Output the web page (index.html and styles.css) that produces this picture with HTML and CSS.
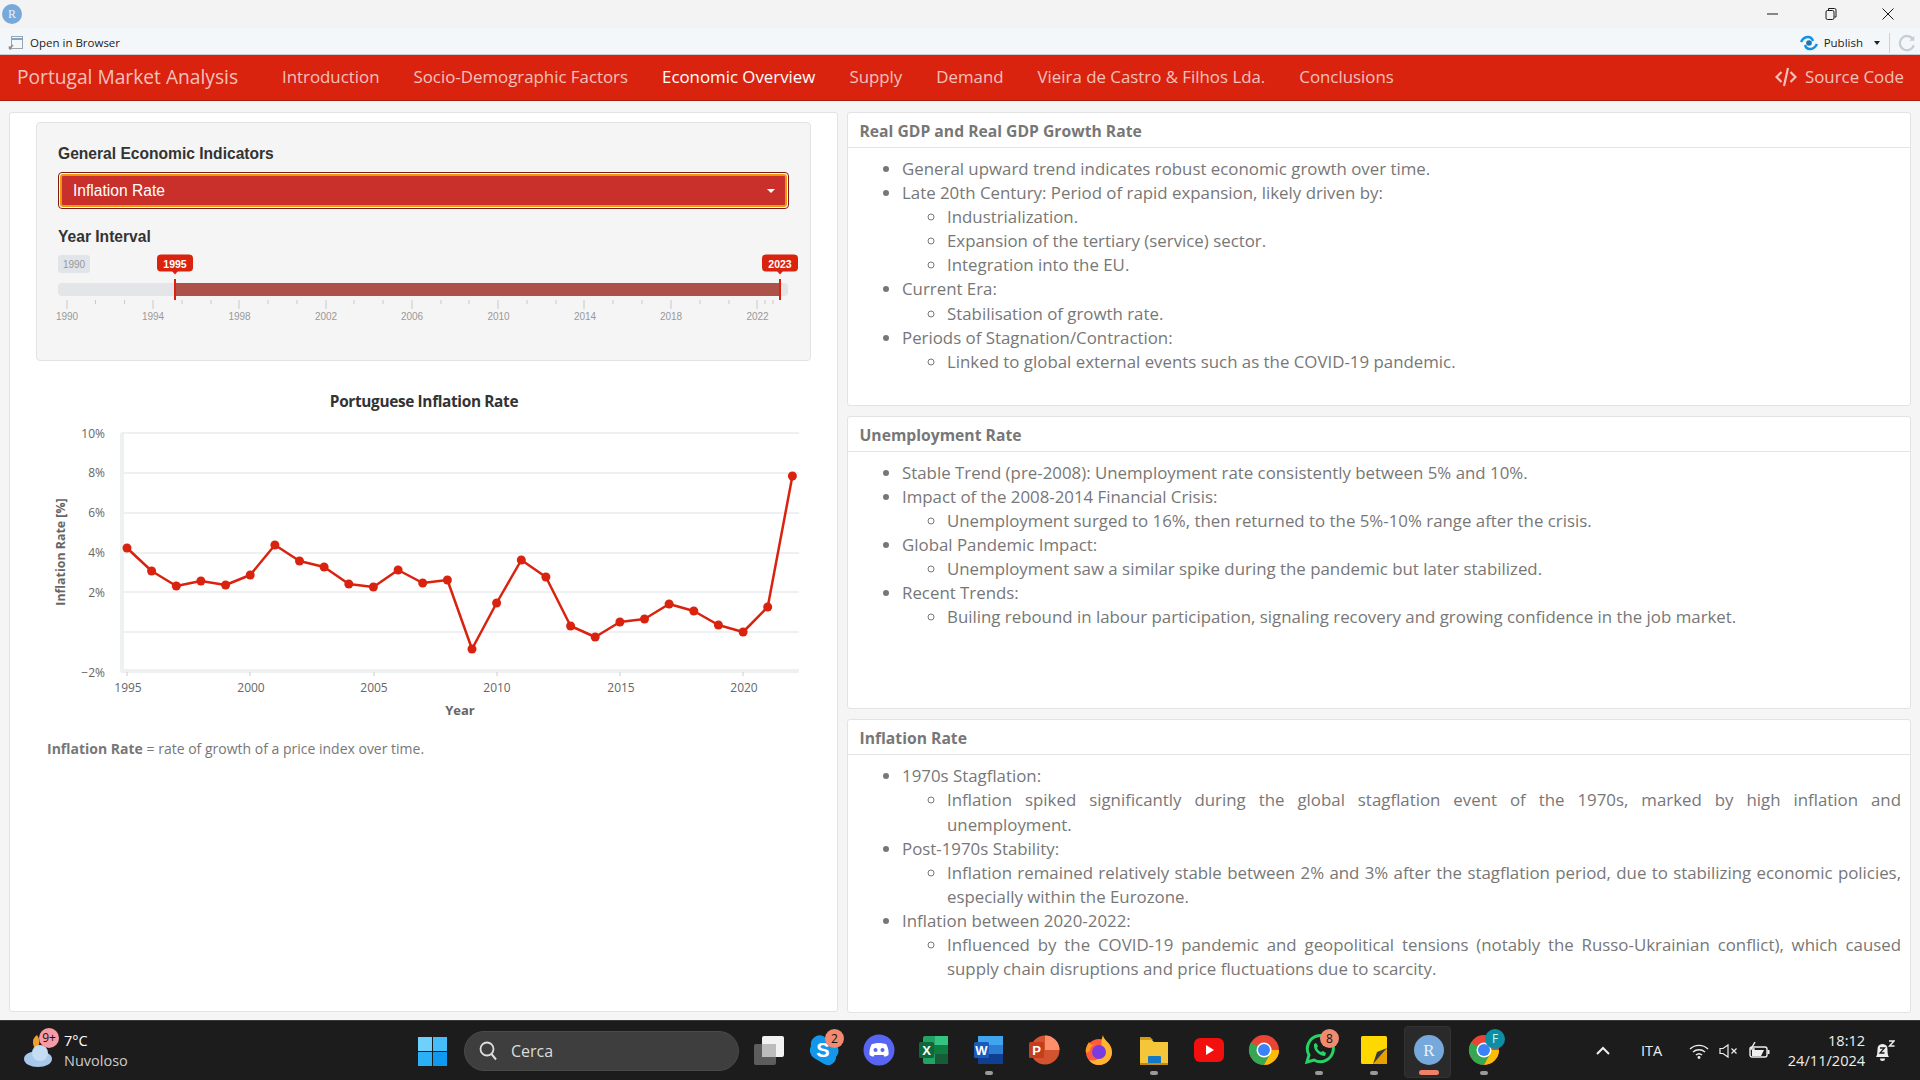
FILE: index.html
```html
<!DOCTYPE html>
<html lang="en">
<head>
<meta charset="utf-8">
<title>Portugal Market Analysis</title>
<link rel="stylesheet" href="styles.css">
</head>
<body>
<div class="titlebar">
  <span class="r-dot">R</span>
  <div class="win-controls">
    <svg width="14" height="14" viewBox="0 0 14 14"><path d="M1 7h11" class="wc"/></svg>
    <svg width="14" height="14" viewBox="0 0 14 14"><rect x="2" y="3.5" width="8" height="9" rx="1.5" class="wc"/><path d="M4.5 3V1.5h6a1.5 1.5 0 0 1 1.5 1.5v7h-1.5" class="wc"/></svg>
    <svg width="14" height="14" viewBox="0 0 14 14"><path d="M1.5 1.5l11 11M12.5 1.5l-11 11" class="wc"/></svg>
  </div>
</div>
<div class="toolbar">
  <svg class="tb-icon" width="16" height="16" viewBox="0 0 16 16"><rect x="3.5" y="1.5" width="11" height="12" fill="#f4f6f8" stroke="#9aa7b3"/><path d="M3.500 4h11" stroke="#7fa6c9" stroke-width="2"/><path d="M1 14l4-4M1 11.500l2 3" stroke="#8b8f93" stroke-width="1.500" fill="none"/></svg>
  <span class="tb-label">Open in Browser</span>
  <span class="tb-spacer"></span>
  <svg class="tb-publish" width="18" height="16" viewBox="0 0 18 16"><path d="M1 7c3-6 10-7 12-1M17 9c-3 6-10 7-12 1" stroke="#1493e6" stroke-width="2.500" fill="none"/><circle cx="9" cy="8" r="2.800" fill="#1475b8"/></svg>
  <span class="tb-label">Publish</span>
  <span class="tb-caret"></span>
  <span class="tb-sep"></span>
  <svg width="18" height="18" viewBox="0 0 16 16"><path d="M13.500 5A6.300 6.300 0 1 0 14 10" fill="none" stroke="#c3ced8" stroke-width="2"/><path d="M14.500 1.500V6h-4.500z" fill="#c3ced8"/></svg>
</div>
<nav class="navbar">
  <a class="brand">Portugal Market Analysis</a>
  <ul class="nav-items">
    <li>Introduction</li>
    <li>Socio-Demographic Factors</li>
    <li class="active">Economic Overview</li>
    <li>Supply</li>
    <li>Demand</li>
    <li>Vieira de Castro &amp; Filhos Lda.</li>
    <li>Conclusions</li>
  </ul>
  <a class="source">
    <svg width="22" height="22" viewBox="0 0 22 22"><path d="M6.500 6L1.500 11l5 5M15.500 6l5 5-5 5M13 2L9 20" fill="none" stroke="currentColor" stroke-width="2.200"/></svg>
    <span>Source Code</span>
  </a>
</nav>
<main class="main">
  <section class="panel left-panel">
    <div class="well">
      <label class="ctl-label">General Economic Indicators</label>
      <div class="select-focus">
        <div class="select-box"><span>Inflation Rate</span><i class="select-caret"></i></div>
      </div>
      <label class="ctl-label year-label">Year Interval</label>
      <svg class="slider" width="750" height="90" viewBox="56 250 750 90">
        <rect x="58" y="255" width="32" height="18" rx="3" fill="#e1e4e8"/>
        <text x="74" y="268" class="s-min">1990</text>
        <rect x="58" y="283" width="730" height="13" rx="4" fill="#e3e5e9"/>
        <rect x="175" y="283" width="605" height="13" fill="#ad5249"/>
        <g class="ticks">
          <path d="M67 300v9M153 300v9M239 300v9M326 300v9M412 300v9M498 300v9M584 300v9M671 300v9M757 300v9" stroke="#c9c9c9"/>
          <path d="M95.500 300v4M124.500 300v4M182 300v4M211 300v4M268 300v4M297 300v4M354 300v4M383 300v4M441 300v4M469 300v4M527 300v4M556 300v4M613 300v4M642 300v4M700 300v4M729 300v4M765 300v4M773 300v4" stroke="#c9c9c9"/>
        </g>
        <g class="s-tick-text">
          <text x="67" y="320">1990</text><text x="153" y="320">1994</text><text x="239.500" y="320">1998</text><text x="326" y="320">2002</text><text x="412" y="320">2006</text><text x="498.500" y="320">2010</text><text x="585" y="320">2014</text><text x="671" y="320">2018</text><text x="757.500" y="320">2022</text>
        </g>
        <path d="M175 279v21M780 279v21" stroke="#d9230f" stroke-width="2"/>
        <rect x="157" y="254.500" width="36" height="17" rx="4" fill="#d9230f"/>
        <path d="M172 271h6l-3 3.500z" fill="#d9230f"/>
        <text x="175" y="267.500" class="s-val">1995</text>
        <rect x="762" y="254.500" width="36" height="17" rx="4" fill="#d9230f"/>
        <path d="M777 271h6l-3 3.500z" fill="#d9230f"/>
        <text x="780" y="267.500" class="s-val">2023</text>
      </svg>
    </div>
    <svg class="chart" width="774" height="345" viewBox="36 385 774 345">
      <text x="424" y="407" class="c-title">Portuguese Inflation Rate</text>
      <path d="M121 433H799M121 473H799M121 513H799M121 553H799M121 592H799M121 632H799" class="c-grid"/>
      <path d="M122 433V672M121 671H799" class="c-axis"/>
      <path d="M127 672v4M250 672v4M374 672v4M497 672v4M620 672v4M743 672v4" stroke="#ccc"/>
      <g class="c-ytick">
        <text x="105" y="438">10%</text><text x="105" y="477">8%</text><text x="105" y="517">6%</text><text x="105" y="557">4%</text><text x="105" y="597">2%</text><text x="105" y="677">−2%</text>
      </g>
      <g class="c-xtick">
        <text x="128" y="692">1995</text><text x="251" y="692">2000</text><text x="374" y="692">2005</text><text x="497" y="692">2010</text><text x="621" y="692">2015</text><text x="744" y="692">2020</text>
      </g>
      <text x="460" y="715" class="c-xlabel">Year</text>
      <text transform="translate(65 552) rotate(-90)" class="c-ylabel">Inflation Rate [%]</text>
      <polyline class="c-line" points="127,548 151.600,571 176.300,586 200.900,581 225.600,585 250.200,575 274.900,545 299.500,561 324.100,567 348.800,584 373.400,587 398.100,570 422.700,583 447.400,580 472,649 496.600,603 521.300,560 545.900,577 570.600,626 595.200,637 619.900,622 644.500,619 669.100,604 693.800,611 718.400,625 743.100,632 767.700,607 792.400,476"/>
      <g class="c-dots">
        <circle cx="127" cy="548" r="4.500"/><circle cx="151.600" cy="571" r="4.500"/><circle cx="176.300" cy="586" r="4.500"/><circle cx="200.900" cy="581" r="4.500"/><circle cx="225.600" cy="585" r="4.500"/><circle cx="250.200" cy="575" r="4.500"/><circle cx="274.900" cy="545" r="4.500"/><circle cx="299.500" cy="561" r="4.500"/><circle cx="324.100" cy="567" r="4.500"/><circle cx="348.800" cy="584" r="4.500"/><circle cx="373.400" cy="587" r="4.500"/><circle cx="398.100" cy="570" r="4.500"/><circle cx="422.700" cy="583" r="4.500"/><circle cx="447.400" cy="580" r="4.500"/><circle cx="472" cy="649" r="4.500"/><circle cx="496.600" cy="603" r="4.500"/><circle cx="521.300" cy="560" r="4.500"/><circle cx="545.900" cy="577" r="4.500"/><circle cx="570.600" cy="626" r="4.500"/><circle cx="595.200" cy="637" r="4.500"/><circle cx="619.900" cy="622" r="4.500"/><circle cx="644.500" cy="619" r="4.500"/><circle cx="669.100" cy="604" r="4.500"/><circle cx="693.800" cy="611" r="4.500"/><circle cx="718.400" cy="625" r="4.500"/><circle cx="743.100" cy="632" r="4.500"/><circle cx="767.700" cy="607" r="4.500"/><circle cx="792.400" cy="476" r="4.500"/>
      </g>
    </svg>
    <p class="caption"><strong>Inflation Rate</strong> = rate of growth of a price index over time.</p>
  </section>
  <div class="right-col">
    <section class="panel card">
      <h3 class="card-head">Real GDP and Real GDP Growth Rate</h3>
      <div class="card-body">
        <ul>
          <li>General upward trend indicates robust economic growth over time.</li>
          <li>Late 20th Century: Period of rapid expansion, likely driven by:
            <ul><li>Industrialization.</li><li>Expansion of the tertiary (service) sector.</li><li>Integration into the EU.</li></ul></li>
          <li>Current Era:<ul><li>Stabilisation of growth rate.</li></ul></li>
          <li>Periods of Stagnation/Contraction:<ul><li>Linked to global external events such as the COVID-19 pandemic.</li></ul></li>
        </ul>
      </div>
    </section>
    <section class="panel card">
      <h3 class="card-head">Unemployment Rate</h3>
      <div class="card-body">
        <ul>
          <li>Stable Trend (pre-2008): Unemployment rate consistently between 5% and 10%.</li>
          <li>Impact of the 2008-2014 Financial Crisis:<ul><li>Unemployment surged to 16%, then returned to the 5%-10% range after the crisis.</li></ul></li>
          <li>Global Pandemic Impact:<ul><li>Unemployment saw a similar spike during the pandemic but later stabilized.</li></ul></li>
          <li>Recent Trends:<ul><li>Builing rebound in labour participation, signaling recovery and growing confidence in the job market.</li></ul></li>
        </ul>
      </div>
    </section>
    <section class="panel card">
      <h3 class="card-head">Inflation Rate</h3>
      <div class="card-body">
        <ul>
          <li>1970s Stagflation:<ul><li class="just"><span class="just-line">Inflation spiked significantly during the global stagflation event of the 1970s, marked by high inflation and</span> unemployment.</li></ul></li>
          <li>Post-1970s Stability:<ul><li class="just">Inflation remained relatively stable between 2% and 3% after the stagflation period, due to stabilizing economic policies, especially within the Eurozone.</li></ul></li>
          <li>Inflation between 2020-2022:<ul><li class="just">Influenced by the COVID-19 pandemic and geopolitical tensions (notably the Russo-Ukrainian conflict), which caused supply chain disruptions and price fluctuations due to scarcity.</li></ul></li>
        </ul>
      </div>
    </section>
  </div>
</main>
<footer class="taskbar">
  <div class="weather">
    <svg width="36" height="40" viewBox="0 0 36 40"><path d="M14 4a9 9 0 0 0 2 16a9 9 0 0 1-12 3a12 12 0 0 0 10-19z" fill="#f0a030"/><ellipse cx="15" cy="28" rx="14" ry="8" fill="#a9c9ec"/><circle cx="17" cy="22" r="8" fill="#c4dcf4"/></svg>
    <span class="wx-badge">9+</span>
    <div class="wx-text"><span class="wx-temp">7°C</span><span class="wx-desc">Nuvoloso</span></div>
  </div>
  <svg class="winlogo" width="29" height="29" viewBox="0 0 29 29"><rect width="14" height="14" fill="#6fd0fb"/><rect x="15" width="14" height="14" fill="#45bdf9"/><rect y="15" width="14" height="14" fill="#2bb0f7"/><rect x="15" y="15" width="14" height="14" fill="#0f9af0"/></svg>
  <div class="search">
    <svg width="20" height="22" viewBox="0 0 20 22"><circle cx="9" cy="9" r="6.500" fill="none" stroke="#ddd" stroke-width="1.800"/><path d="M13.500 14l4.500 5.500" stroke="#ddd" stroke-width="2"/></svg>
    <span>Cerca</span>
  </div>
  <div class="apps">
    <div class="app"><svg width="32" height="32" viewBox="0 0 32 32"><rect x="1" y="10" width="22" height="21" rx="2" fill="#5d5d5d"/><rect x="9" y="2" width="22" height="21" rx="2" fill="#f2f2f2"/><rect x="9" y="10" width="14" height="13" fill="#bcbcbc"/></svg></div>
    <div class="app"><svg width="32" height="32" viewBox="0 0 32 32"><path d="M3 12a9 9 0 0 1 12-10l11 7a9 9 0 0 1 2 14 8 8 0 0 1-12 7L6 24a9 9 0 0 1-3-12z" fill="#1497ea"/><text x="15" y="23" class="i-letter i-s">S</text></svg><span class="app-badge">2</span></div>
    <div class="app"><svg width="32" height="32" viewBox="0 0 32 32"><circle cx="16" cy="16" r="15.500" fill="#5865f2"/><path d="M8.500 10.500c4-2 11-2 15 0 1.500 3 2.500 7 2 10.500-1.500 1-3 1.500-4 1.800l-1-1.800h-9l-1 1.800c-1-.3-2.500-.8-4-1.800-.5-3.500.5-7.500 2-10.500z" fill="#fff"/><circle cx="12.500" cy="16" r="2" fill="#5865f2"/><circle cx="19.500" cy="16" r="2" fill="#5865f2"/></svg></div>
    <div class="app"><svg width="32" height="32" viewBox="0 0 32 32"><rect x="5" y="2" width="25" height="28" rx="2" fill="#21a366"/><rect x="17" y="2" width="13" height="9" fill="#33c481"/><rect x="5" y="11" width="25" height="9" fill="#107c41"/><rect x="17" y="20" width="13" height="10" fill="#185c37"/><rect x="1" y="8" width="15" height="16" rx="1.500" fill="#0d6a38"/><text x="8.500" y="21" class="i-letter i-x">X</text></svg></div>
    <div class="app has-dot"><svg width="32" height="32" viewBox="0 0 32 32"><rect x="5" y="2" width="25" height="28" rx="2" fill="#2b7cd3"/><rect x="5" y="2" width="25" height="9" fill="#41a5ee"/><rect x="5" y="20" width="25" height="10" fill="#103f91"/><rect x="1" y="8" width="15" height="16" rx="1.500" fill="#185abd"/><text x="8.500" y="21" class="i-letter i-x">W</text></svg></div>
    <div class="app"><svg width="32" height="32" viewBox="0 0 32 32"><circle cx="17" cy="16" r="14.500" fill="#d35230"/><path d="M17 1.500A14.500 14.500 0 0 1 31.500 16H17z" fill="#ff8f6b"/><rect x="1" y="8" width="15" height="16" rx="1.500" fill="#c43e1c"/><text x="8.500" y="21" class="i-letter i-x">P</text></svg></div>
    <div class="app"><svg width="32" height="32" viewBox="0 0 32 32"><circle cx="16" cy="18" r="13" fill="#ff5a3c"/><path d="M20 1c0 5 9 8 9 18a13 13 0 0 1-13 12c-4 0-8-2-10-5 7 2 14-2 13-9 0-6-2-8 1-16z" fill="#ffb52e"/><circle cx="16" cy="18" r="7" fill="#7a3be0"/><path d="M3 19c-1-4 1-8 3-11l2 3 5-2c-3 2-6 4-6 8z" fill="#ff9a1f"/></svg></div>
    <div class="app has-dot"><svg width="32" height="32" viewBox="0 0 32 32"><path d="M2 5h11l3 3h14v22H2z" fill="#f5c53a"/><path d="M2 3h10l3 3H2z" fill="#d79b13"/><rect x="10" y="22" width="13" height="8" rx="1" fill="#1479c9"/><rect x="2" y="29" width="28" height="2" fill="#c28a10"/></svg></div>
    <div class="app"><svg width="32" height="32" viewBox="0 0 32 32"><rect x="1" y="4" width="30" height="24" rx="6" fill="#f40f0f"/><path d="M13 11l8 5-8 5z" fill="#fff"/></svg></div>
    <div class="app"><svg width="32" height="32" viewBox="0 0 32 32"><circle cx="16" cy="16" r="15" fill="#e94435"/><path d="M16 16L3 23.500A15 15 0 0 1 3 8.500z" fill="#32a852"/><path d="M16 16L3 23.500A15 15 0 0 0 16 31l7.500-13z" fill="#34a853"/><path d="M16 16h15A15 15 0 0 1 16 31l6-11z" fill="#fbbc05"/><circle cx="16" cy="16" r="7.500" fill="#fff"/><circle cx="16" cy="16" r="6" fill="#3b82f6"/></svg></div>
    <div class="app has-dot"><svg width="32" height="32" viewBox="0 0 32 32"><path d="M4 28l2-7a13 13 0 1 1 5 5z" fill="#1c1c1c" stroke="#25d366" stroke-width="3"/><path d="M11 10c-1 6 5 12 11 12l1-3-3-2-2 1c-2-1-3-2-4-4l1-2-2-3z" fill="#25d366"/></svg><span class="app-badge">8</span></div>
    <div class="app has-dot"><svg width="32" height="32" viewBox="0 0 32 32"><rect x="3" y="2" width="26" height="28" rx="1.500" fill="#ffd800"/><path d="M29 14v14a2 2 0 0 1-2 2H15z" fill="#e89f00"/><path d="M29 14L15 30l4-12z" fill="#3a3a3a"/></svg></div>
    <div class="app active-app"><svg width="32" height="32" viewBox="0 0 32 32"><circle cx="16" cy="16" r="15" fill="#75a9dc"/><text x="16" y="22" class="i-letter i-r">R</text></svg></div>
    <div class="app has-dot"><svg width="32" height="32" viewBox="0 0 32 32"><circle cx="16" cy="16" r="15" fill="#e94435"/><path d="M16 16L3 23.500A15 15 0 0 1 3 8.500z" fill="#32a852"/><path d="M16 16L3 23.500A15 15 0 0 0 16 31l7.500-13z" fill="#34a853"/><path d="M16 16h15A15 15 0 0 1 16 31l6-11z" fill="#fbbc05"/><circle cx="16" cy="16" r="7.500" fill="#fff"/><circle cx="16" cy="16" r="6" fill="#3b82f6"/></svg><span class="app-badge teal">F</span></div>
  </div>
  <div class="tray">
    <svg class="tray-chev" width="14" height="9" viewBox="0 0 14 9"><path d="M1 8l6-6 6 6" fill="none" stroke="#eee" stroke-width="2"/></svg>
    <span class="tray-lang">ITA</span>
    <svg class="tray-wifi" width="20" height="16" viewBox="0 0 20 16"><path d="M1 6a13 13 0 0 1 18 0M4 9a9 9 0 0 1 12 0M7 12a4.500 4.500 0 0 1 6 0" fill="none" stroke="#eee" stroke-width="1.400"/><circle cx="10" cy="14.500" r="1.400" fill="#eee"/></svg>
    <svg class="tray-vol" width="20" height="16" viewBox="0 0 20 16"><path d="M1 5.500h3L9 2v12L4 10.500H1z" fill="none" stroke="#eee" stroke-width="1.200"/><path d="M12.500 5.500l5 5M17.500 5.500l-5 5" stroke="#eee" stroke-width="1.200"/></svg>
    <svg class="tray-bat" width="21" height="18" viewBox="0 0 21 18"><rect x="1" y="5" width="17" height="10" rx="2" fill="none" stroke="#eee" stroke-width="1.400"/><rect x="18.500" y="8" width="2" height="4" fill="#eee"/><path d="M3 14V8h12l-3 6z" fill="#eee"/><path d="M6 0L2 7h3l-1 4" fill="none" stroke="#eee" stroke-width="1.400"/></svg>
    <div class="clock"><span>18:12</span><span>24/11/2024</span></div>
    <svg class="tray-bell" width="20" height="22" viewBox="0 0 20 22"><path d="M1 17c2-2 1-8 2-10.500 1.500-3.500 7.500-3.500 9 0 1 2.500 0 8.500 2 10.500z" fill="#eee"/><path d="M5 18.500h5a2.500 2.500 0 0 1-5 0z" fill="#eee"/><path d="M5 8h4.500L5 13h4.500" fill="none" stroke="#1c1c1c" stroke-width="1.300"/><path d="M14 1h5l-4.500 5h5" fill="none" stroke="#eee" stroke-width="1.400"/></svg>
  </div>
</footer>
</body>
</html>
```

FILE: styles.css
```css
* { box-sizing: border-box; }
html, body { margin: 0; height: 100%; }
body {
  width: 1920px; height: 1080px; overflow: hidden;
  display: flex; flex-direction: column;
  background: #f5f5f5; color: #777;
  font-family: "Open Sans", sans-serif; font-size: 16.850px; line-height: 24px;
}
.titlebar { height: 28px; background: #f3f3f3; display: flex; align-items: center; justify-content: space-between; padding-left: 2px; flex: none; }
.r-dot { width: 20px; height: 20px; border-radius: 50%; background: #75a9dc; color: #e8f1fa; font: 12px/20px "Liberation Serif", serif; text-align: center; }
.win-controls { display: flex; gap: 43.500px; padding-right: 25px; }
.wc { fill: none; stroke: #1a1a1a; stroke-width: 1; }
.toolbar { height: 27px; background: #f4f7f9; border-bottom: 1px solid #c9cdd1; display: flex; align-items: center; padding: 3px 4px 0 8px; flex: none; }
.tb-label { font: 11.500px/1 "Open Sans", sans-serif; color: #222; margin-left: 6px; }
.tb-spacer { flex: 1; }
.tb-caret { border: 3px solid transparent; border-top: 4px solid #222; margin: 4px 0 0 11px; }
.tb-sep { width: 1px; height: 20px; background: #ccd2d8; margin: 0 8px 0 9px; }
.navbar { height: 46px; background: #d9230f; border-bottom: 1px solid #a91b0c; display: flex; align-items: center; padding: 0 16px 2px 17px; color: rgba(255,255,255,.72); flex: none; }
.brand { font-size: 19.200px; width: 265px; flex: none; }
.nav-items { list-style: none; margin: 0; padding: 0; display: flex; gap: 34px; flex: 1; }
.nav-items .active { color: #fff; }
.source { display: flex; align-items: center; gap: 8px; }
.main { height: 919px; display: grid; grid-template-columns: 829px 1064px; gap: 9px; padding: 11px 9px 8px 9px; flex: none; }
.panel { background: #fff; border: 1px solid #e3e3e3; border-radius: 3px; }
.left-panel { padding: 9px 26px 0; display: flex; flex-direction: column; height: 900px; }
.well { background: #f5f5f5; border: 1px solid #e3e3e3; border-radius: 4px; height: 239px; padding: 21px 21px 0; flex: none; }
.ctl-label { display: block; font: 700 15.600px/20px "Liberation Sans", sans-serif; color: #333; margin-bottom: 8px; }
.year-label { margin: 18px 0 3px; }
.select-focus { height: 37px; border: 1px solid #7d1a14; border-radius: 4px; background: #fff; padding: 1px; }
.select-box { height: 33px; background: #c9302c; border: 2px solid #ec9a0c; border-radius: 3px; color: #fff; font: 15.600px/29px "Liberation Sans", sans-serif; padding: 0 10px 0 11px; display: flex; align-items: center; justify-content: space-between; }
.select-caret { border: 4px solid transparent; border-top: 4px solid #fff; margin-top: 4px; }
.slider { display: block; margin-left: -2px; overflow: visible; }
.s-min { font: 10px "Liberation Sans", sans-serif; fill: #999; text-anchor: middle; }
.s-val { font: 700 10.500px "Liberation Sans", sans-serif; fill: #fff; text-anchor: middle; }
.s-tick-text text { font: 10px "Liberation Sans", sans-serif; fill: #999; text-anchor: middle; }
.chart { display: block; margin-top: 24px; flex: none; }
.c-title { font: 700 15.400px "Open Sans", sans-serif; fill: #333; text-anchor: middle; letter-spacing: -.35px; }
.c-grid { stroke: #e9ecef; stroke-width: 1.500; fill: none; }
.c-axis { stroke: #eef1f2; stroke-width: 4; fill: none; }
.c-ytick text { font: 12px "Open Sans", sans-serif; fill: #666; text-anchor: end; }
.c-xtick text { font: 12px "Open Sans", sans-serif; fill: #666; text-anchor: middle; }
.c-xlabel { font: 700 13px "Open Sans", sans-serif; fill: #666; text-anchor: middle; }
.c-ylabel { font: 700 12.400px "Open Sans", sans-serif; fill: #666; text-anchor: middle; }
.c-line { fill: none; stroke: #d9230f; stroke-width: 2.500; stroke-linejoin: round; }
.c-dots circle { fill: #d9230f; }
.caption { margin: 9px 0 0 11px; font-size: 14px; line-height: 20px; color: #777; }
.right-col { display: flex; flex-direction: column; gap: 10px; height: 901px; }
.card { flex: 1; min-height: 0; }
.card-head { margin: 0; height: 35px; padding: 0 12px 0 11.500px; font-size: 15.700px; font-weight: 700; line-height: 36px; color: #777; border-bottom: 1px solid #e3e3e3; }
.card-body { padding: 9px 9px 0; line-height: 24.100px; }
.card-body ul { margin: 0; padding-left: 45px; }
.card-body ul ul { list-style: circle; }
.just { text-align: justify; }
.just-line { display: block; text-align-last: justify; }
.taskbar { height: 60px; background: #1c1c1c; border-top: 1px solid #3a3a3a; display: flex; align-items: center; color: #eee; flex: none; font-family: "Open Sans", sans-serif; }
.weather { position: relative; width: 418px; display: flex; align-items: center; padding-left: 23px; height: 100%; flex: none; }
.wx-badge { position: absolute; left: 39px; top: 7px; width: 20px; height: 20px; border-radius: 50%; background: #f79aa5; color: #111; font-size: 12px; line-height: 20px; text-align: center; }
.wx-text { display: flex; flex-direction: column; margin-left: 5px; font-size: 14.500px; line-height: 20px; }
.wx-temp { color: #fff; }
.wx-desc { color: #ccc; }
.winlogo { flex: none; margin-top: 1px; }
.search { width: 275px; height: 40px; margin-left: 17px; background: #3e3e3e; border: 1px solid #4a4a4a; border-radius: 20px; display: flex; align-items: center; gap: 13px; padding-left: 13px; font-size: 16px; color: #ddd; flex: none; }
.apps { display: flex; gap: 23px; margin: 0 0 2px 14px; align-items: center; flex: none; }
.app { position: relative; width: 32px; height: 32px; flex: none; }
.app svg { display: block; }
.app-badge { position: absolute; top: -5px; right: -4px; width: 19px; height: 19px; border-radius: 50%; background: #f28a70; color: #111; font-size: 12px; line-height: 19px; text-align: center; }
.app-badge.teal { background: #0e8ea5; color: #bfe; top: -5px; right: -5px; width: 20px; height: 20px; line-height: 20px; }
.has-dot::after { content: ""; position: absolute; left: 12px; bottom: -9px; width: 8px; height: 4px; border-radius: 2px; background: #9a9a9a; }
.active-app::before { content: ""; position: absolute; left: -9px; top: -8px; width: 45px; height: 50px; border-radius: 4px; background: #2a2a2a; border: 1px solid #333; }
.active-app svg { position: relative; }
.active-app::after { content: ""; position: absolute; left: 6px; bottom: -9px; width: 20px; height: 5px; border-radius: 3px; background: #f0806a; }
.i-letter { font-family: "Liberation Sans", sans-serif; font-weight: 700; fill: #fff; text-anchor: middle; }
.i-s { font-size: 20px; }
.i-x { font-size: 13px; }
.i-r { font: 17px "Liberation Serif", serif; fill: #e8f1fa; }
.tray { display: flex; align-items: center; margin-left: 96px; font-size: 14.500px; }
.tray-lang { margin-left: 31px; }
.tray-wifi { margin-left: 27px; }
.tray-vol { margin-left: 10px; }
.tray-bat { margin-left: 10px; }
.clock { display: flex; flex-direction: column; align-items: flex-end; margin: -2px 0 0 5px; line-height: 20px; width: 90px; font-size: 14.600px; }
.tray-bell { margin-left: 10px; flex: none; }
```
